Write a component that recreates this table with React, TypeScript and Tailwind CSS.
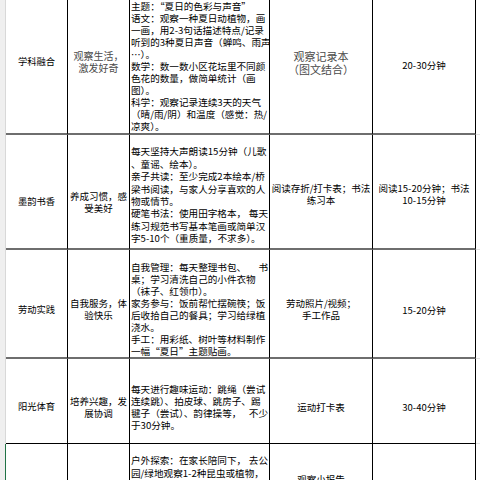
import type { ReactNode } from "react";

type Line = string | [string, string];

function Body({ lines, lead = "leading-[12px]" }: { lines: Line[]; lead?: string }) {
  return (
    <div className={`w-full pl-px pr-px text-[9.6px] text-black ${lead}`}>
      {lines.map((l, i) =>
        typeof l === "string" ? (
          <div key={i} className="whitespace-nowrap">
            {l}
          </div>
        ) : (
          <div key={i} className="flex justify-between whitespace-nowrap">
            <span>{l[0]}</span>
            <span>{l[1]}</span>
          </div>
        )
      )}
    </div>
  );
}

function Cell({
  w,
  edge,
  top = "justify-center",
  className = "",
  children,
}: {
  w: string;
  edge: string;
  top?: string;
  className?: string;
  children?: ReactNode;
}) {
  return (
    <div className={`${w} ${edge} ${top} ${className} flex shrink-0 flex-col items-center overflow-hidden whitespace-nowrap border-r border-r-black text-center`}>
      {children}
    </div>
  );
}

function Row({ h, mark, children }: { h: string; mark?: boolean; children: ReactNode }) {
  return (
    <div className={`flex ${h}`}>
      <div className={`w-[6px] shrink-0 border-r bg-[#efefef] ${mark ? "border-r-[#217346]" : "border-r-[#d8d8d8]"}`} />
      {children}
      <div className="flex-1 border-b border-b-[#e3e3e3]" />
    </div>
  );
}

const thick = "border-b-2 border-b-[#6e6e6e]";
const thin = "border-b border-b-black";

export default function App() {
  return (
    <div className="h-[480px] w-[480px] overflow-hidden bg-white font-['Noto_Sans_CJK_SC','Noto_Sans',sans-serif] text-[9.5px] text-black">
      <div className="-mt-[14px]">
        {/* 学科融合 */}
        <Row h="h-[149px]">
          <Cell w="w-[62px]" edge={thick} className="pt-[5px] text-[9.3px]">学科融合</Cell>
          <Cell w="w-[62px]" edge={thick} className="pt-[5px] text-[10px] leading-[12px] text-[#4a4a4a]">
            <div>观察生活，</div>
            <div>激发好奇</div>
          </Cell>
          <Cell w="w-[140px]" edge={thick} className="pt-[12px] text-left">
            <Body
              lines={[
                "主题：“夏日的色彩与声音”",
                "语文：观察一种夏日动植物，画",
                "一画，用2-3句话描述特点/记录",
                "听到的3种夏日声音（蝉鸣、雨声",
                "…）。",
                "数学：数一数小区花坛里不同颜",
                "色花的数量，做简单统计（画",
                "图）。",
                "科学：观察记录连续3天的天气",
                "（晴/雨/阴）和温度（感觉：热/",
                "凉爽）。",
              ]}
            />
          </Cell>
          <Cell w="w-[103px]" edge={thick} className="pt-[6px] text-[11px] leading-[13px] text-[#4a4a4a]">
            <div>观察记录本</div>
            <div>（图文结合）</div>
          </Cell>
          <Cell w="w-[103px]" edge={thick} className="pt-[11px]">20-30分钟</Cell>
        </Row>

        {/* 墨韵书香 */}
        <Row h="h-[115px]">
          <Cell w="w-[62px]" edge={thick} className="pt-[21px] text-[9.3px]">墨韵书香</Cell>
          <Cell w="w-[62px]" edge={thick} className="pt-[21px] leading-[12px]">
            <div>养成习惯，感</div>
            <div>受美好</div>
          </Cell>
          <Cell w="w-[140px]" edge={thick} className="pt-[7px] text-left">
            <Body
              lead="leading-[12.4px]"
              lines={[
                "每天坚持大声朗读15分钟（儿歌",
                "、童谣、绘本）。",
                "亲子共读：至少完成2本绘本/桥",
                "梁书阅读，与家人分享喜欢的人",
                "物或情节。",
                ["硬笔书法：使用田字格本，", "每天"],
                "练习规范书写基本笔画或简单汉",
                "字5-10个（重质量，不求多）。",
              ]}
            />
          </Cell>
          <Cell w="w-[103px]" edge={thick} className="pt-[5px] leading-[12px]">
            <div>阅读存折/打卡表；书法</div>
            <div>练习本</div>
          </Cell>
          <Cell w="w-[103px]" edge={thick} className="pt-[5px] leading-[12px]">
            <div>阅读15-20分钟；书法</div>
            <div>10-15分钟</div>
          </Cell>
        </Row>

        {/* 劳动实践 */}
        <Row h="h-[109px]">
          <Cell w="w-[62px]" edge={thick} className="pt-[13px] text-[9.3px]">劳动实践</Cell>
          <Cell w="w-[62px]" edge={thick} className="pt-[11px] leading-[12px]">
            <div>自我服务，体</div>
            <div>验快乐</div>
          </Cell>
          <Cell w="w-[140px]" edge={thick} className="pt-[10px] text-left">
            <Body
              lines={[
                ["自我管理：每天整理书包、", "书"],
                "桌；学习清洗自己的小件衣物",
                "（袜子、红领巾）。",
                "家务参与：饭前帮忙摆碗筷；饭",
                "后收拾自己的餐具；学习给绿植",
                "浇水。",
                "手工：用彩纸、树叶等材料制作",
                "一幅“夏日”主题贴画。",
              ]}
            />
          </Cell>
          <Cell w="w-[103px]" edge={thick} className="pt-[11px] leading-[12px]">
            <div>劳动照片/视频；</div>
            <div>手工作品</div>
          </Cell>
          <Cell w="w-[103px]" edge={thick} className="pt-[13px]">15-20分钟</Cell>
        </Row>

        {/* 阳光体育 */}
        <Row h="h-[85px]">
          <Cell w="w-[62px]" edge={thin} className="pt-[11px] text-[9.3px]">阳光体育</Cell>
          <Cell w="w-[62px]" edge={thin} className="pt-[12px] leading-[12px]">
            <div>培养兴趣，发</div>
            <div>展协调</div>
          </Cell>
          <Cell w="w-[140px]" edge={thin} className="pt-[12px] text-left">
            <Body
              lines={[
                "每天进行趣味运动：跳绳（尝试",
                "连续跳）、拍皮球、跳房子、踢",
                ["毽子（尝试）、韵律操等，", "不少"],
                "于30分钟。",
              ]}
            />
          </Cell>
          <Cell w="w-[103px]" edge={thin} className="pt-[13px]">运动打卡表</Cell>
          <Cell w="w-[103px]" edge={thin} className="pt-[13px]">30-40分钟</Cell>
        </Row>

        {/* 下一行，只露出顶部 */}
        <Row h="h-[60px]" mark>
          <Cell w="w-[62px]" edge="" />
          <Cell w="w-[62px]" edge="" />
          <Cell w="w-[140px]" edge="" top="justify-start" className="pt-[10px] text-left">
            <Body
              lead="leading-[12.5px]"
              lines={[["户外探索：在家长陪同下，", "去公"], "园/绿地观察1-2种昆虫或植物，"]}
            />
          </Cell>
          <Cell w="w-[103px]" edge="" top="justify-start" className="pt-[29px] leading-[12px]">
            <div>观察小报告</div>
          </Cell>
          <Cell w="w-[103px]" edge="" />
        </Row>
      </div>
    </div>
  );
}
